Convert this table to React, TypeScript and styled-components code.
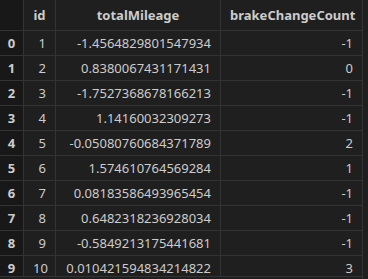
import React from "react";
import styled, { createGlobalStyle } from "styled-components";

const GlobalStyle = createGlobalStyle`
  html, body {
    margin: 0;
    padding: 0;
    background: #1f1f1f;
  }
`;

const OutputFrame = styled.div`
  width: 362px;
  height: 279px;
  border-right: 1px solid #333333;
  background: #1f1f1f;
  font-family: "Noto Sans", "Open Sans", sans-serif;
  font-size: 13px;
  color: #cccccc;
`;

const ScrollArea = styled.div`
  height: 276px;
  overflow: hidden;
  border-bottom: 1px solid #333333;
`;

const Grid = styled.div`
  display: grid;
  grid-template-columns: 24px 32px 165px 141px;
`;

const Row = styled.div`
  display: contents;
`;

const Cell = styled.div<{ $head?: boolean; $index?: boolean; $last?: boolean }>`
  box-sizing: border-box;
  height: ${(p) => (p.$head ? 31 : 25)}px;
  line-height: ${(p) => (p.$head ? 30 : 24)}px;
  border-bottom: 1px solid #333333;
  border-right: ${(p) => (p.$last ? "none" : "1px solid #333333")};
  padding: ${(p) => (p.$index ? "0" : "0 9px")};
  white-space: nowrap;
  overflow: hidden;
  text-align: ${(p) => (p.$head || p.$index ? "center" : "right")};
  font-weight: ${(p) => (p.$head || p.$index ? 700 : 400)};
  background: ${(p) => (p.$index ? "#181818" : "#1f1f1f")};
`;

type Record = { id: number; mileage: string; brakes: number };

const rows: Record[] = [
  { id: 1, mileage: "-1.4564829801547934", brakes: -1 },
  { id: 2, mileage: "0.8380067431171431", brakes: 0 },
  { id: 3, mileage: "-1.7527368678166213", brakes: -1 },
  { id: 4, mileage: "1.14160032309273", brakes: -1 },
  { id: 5, mileage: "-0.05080760684371789", brakes: 2 },
  { id: 6, mileage: "1.574610764569284", brakes: 1 },
  { id: 7, mileage: "0.08183586493965454", brakes: -1 },
  { id: 8, mileage: "0.6482318236928034", brakes: -1 },
  { id: 9, mileage: "-0.5849213175441681", brakes: -1 },
  { id: 10, mileage: "0.010421594834214822", brakes: 3 },
];

const App = () => {
  return (
    <>
      <GlobalStyle />
      <OutputFrame>
        <ScrollArea>
          <Grid>
            <Row>
              <Cell $head $index />
              <Cell $head>id</Cell>
              <Cell $head>totalMileage</Cell>
              <Cell $head $last>
                brakeChangeCount
              </Cell>
            </Row>
            {rows.map((r, i) => (
              <Row key={r.id}>
                <Cell $index>{i}</Cell>
                <Cell>{r.id}</Cell>
                <Cell>{r.mileage}</Cell>
                <Cell $last>{r.brakes}</Cell>
              </Row>
            ))}
          </Grid>
        </ScrollArea>
      </OutputFrame>
    </>
  );
};

export default App;
